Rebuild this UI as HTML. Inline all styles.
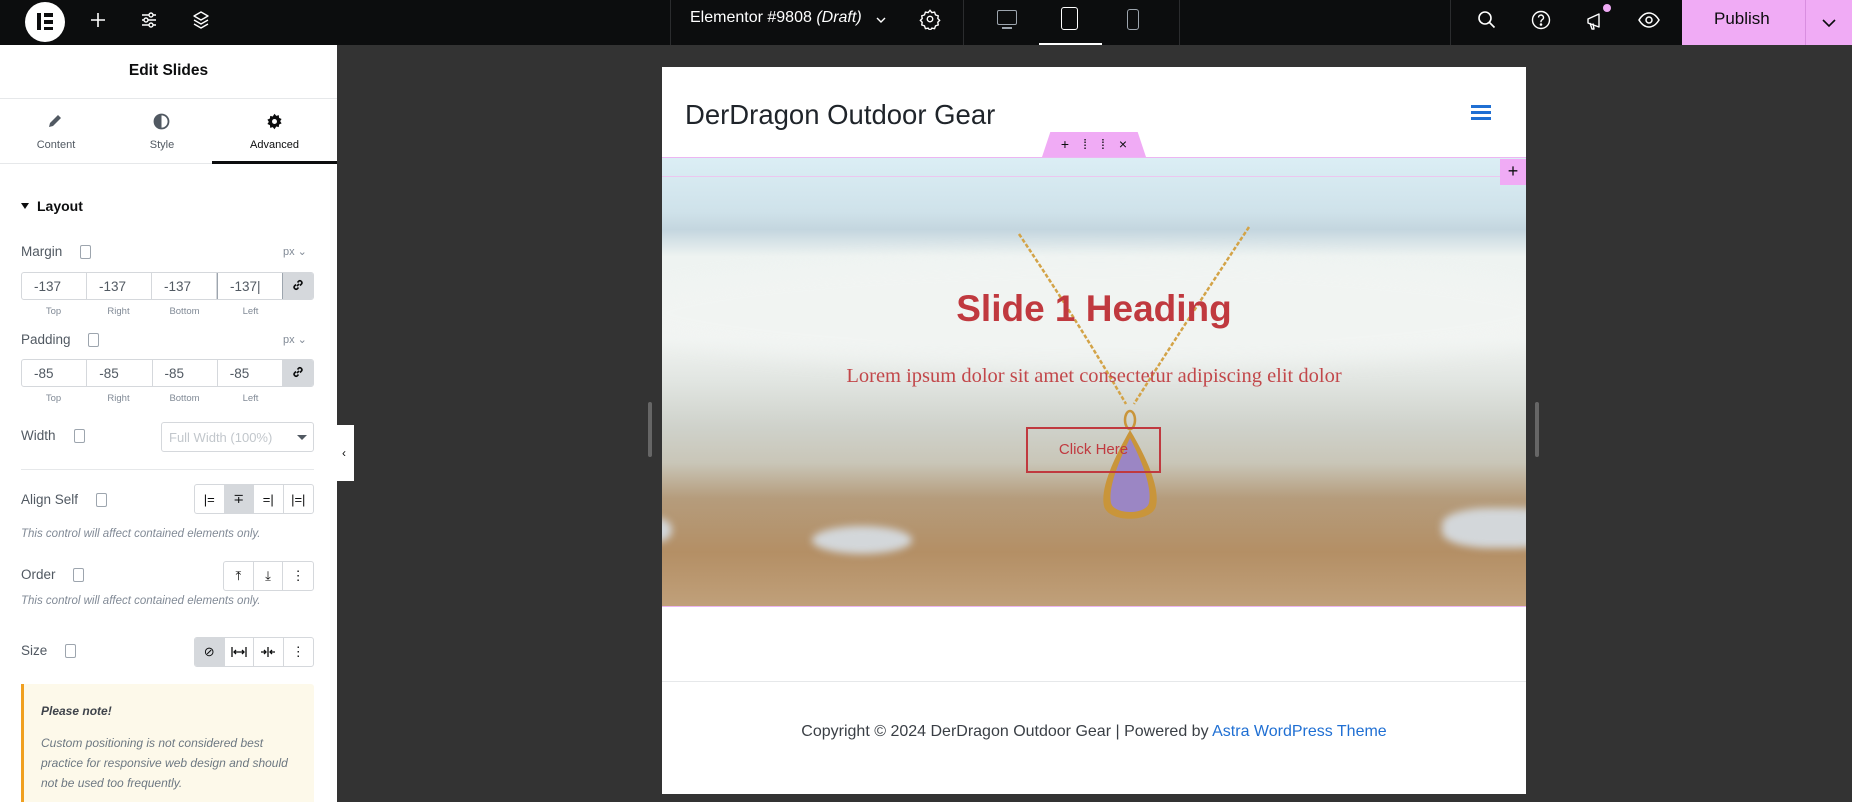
<!DOCTYPE html>
<html><head><meta charset="utf-8">
<style>
*{box-sizing:border-box;margin:0;padding:0}
html{width:1852px;height:802px;overflow:hidden}
body{width:1852px;height:802px;overflow:hidden;background:#333;font-family:"Liberation Sans",sans-serif;position:relative}
.abs{position:absolute}
#top{left:0;top:0;width:1852px;height:45px;background:#0c0d0e}
.sep{position:absolute;top:0;width:1px;height:45px;background:#2b2c2e}
#panel{left:0;top:45px;width:337px;height:757px;background:#fff;overflow:hidden}
.lbl{position:absolute;font-size:13.5px;color:#515962}
.dev{position:absolute;width:11px;height:14px;border:1.5px solid #9da5ae;border-radius:2px}
.inp{position:absolute;height:28px;border:1px solid #d5d8dc;border-radius:3px;display:flex;overflow:hidden}
.inp div{flex:1;border-right:1px solid #d5d8dc;font-size:13.5px;color:#515962;padding:6px 0 0 12px}
.inp div.lk{flex:0 0 30px;border:none;background:#d5d8dc;padding:5px 0 0 8px}
.sub{position:absolute;font-size:9.5px;color:#818a96;text-align:center;width:65px}
.grp{position:absolute;height:30px;border:1px solid #d5d8dc;border-radius:3px;display:flex;overflow:hidden}
.grp div{width:30px;border-right:1px solid #d5d8dc;display:flex;align-items:center;justify-content:center;font-size:13px;color:#0c0d0e;white-space:nowrap}
.grp div:last-child{border-right:none}
.note{position:absolute;left:21px;font-size:11.5px;font-style:italic;color:#818a96}
</style></head><body>

<div id="top" class="abs">
  <div class="abs" style="left:25px;top:2px;width:40px;height:40px;border-radius:50%;background:#fff"></div>
  <div class="abs" style="left:37px;top:13px;width:4px;height:17px;background:#0c0d0e"></div>
  <div class="abs" style="left:44px;top:13px;width:9px;height:3.5px;background:#0c0d0e"></div>
  <div class="abs" style="left:44px;top:20px;width:9px;height:3.5px;background:#0c0d0e"></div>
  <div class="abs" style="left:44px;top:26.5px;width:9px;height:3.5px;background:#0c0d0e"></div>
  <svg class="abs" style="left:88px;top:10px" width="20" height="20" viewBox="0 0 20 20"><path d="M10 3v14M3 10h14" stroke="#fff" stroke-width="1.6"/></svg>
  <svg class="abs" style="left:139px;top:10px" width="20" height="20" viewBox="0 0 20 20" fill="none" stroke="#fff" stroke-width="1.4"><path d="M3 5h14M3 10h14M3 15h14"/><circle cx="12" cy="5" r="2" fill="#0c0d0e"/><circle cx="7" cy="10" r="2" fill="#0c0d0e"/><circle cx="12" cy="15" r="2" fill="#0c0d0e"/></svg>
  <svg class="abs" style="left:190px;top:9px" width="22" height="22" viewBox="0 0 22 22" fill="none" stroke="#fff" stroke-width="1.4" stroke-linejoin="round"><path d="M11 3l7 4-7 4-7-4z"/><path d="M4 11l7 4 7-4"/><path d="M4 15l7 4 7-4"/></svg>
  <div class="sep" style="left:670px"></div>
  <div class="abs" style="left:690px;top:9px;color:#fff;font-size:16px">Elementor #9808 <i>(Draft)</i></div>
  <svg class="abs" style="left:874px;top:13px" width="14" height="14" viewBox="0 0 14 14"><path d="M3 5l4 4 4-4" stroke="#fff" fill="none" stroke-width="1.4"/></svg>
  <svg class="abs" style="left:919px;top:8px" width="22" height="22" viewBox="0 0 24 24" fill="none" stroke="#fff" stroke-width="1.5"><circle cx="12" cy="12" r="3"/><path d="M12 2.5l2 2.5 3-.5 1 3 3 1-.5 3 2 2-2 2 .5 3-3 1-1 3-3-.5-2 2.5-2-2.5-3 .5-1-3-3-1 .5-3-2-2 2-2-.5-3 3-1 1-3 3 .5z"/></svg>
  <div class="sep" style="left:963px"></div>
  <div class="abs" style="left:997px;top:10px;width:20px;height:15px;border:1.5px solid #9da5ae;border-radius:2px"></div>
  <div class="abs" style="left:1002px;top:27px;width:10px;height:2px;background:#9da5ae"></div>
  <div class="abs" style="left:1061px;top:7px;width:17px;height:23px;border:1.8px solid #fff;border-radius:3px"></div>
  <div class="abs" style="left:1039px;top:43px;width:63px;height:2px;background:#fff"></div>
  <div class="abs" style="left:1127px;top:9px;width:12px;height:21px;border:1.5px solid #9da5ae;border-radius:3px"></div>
  <div class="sep" style="left:1179px"></div>
  <div class="sep" style="left:1450px"></div>
  <svg class="abs" style="left:1476px;top:9px" width="22" height="22" viewBox="0 0 22 22" fill="none" stroke="#fff" stroke-width="1.6"><circle cx="9" cy="9" r="6"/><path d="M13.5 13.5l5 5"/></svg>
  <svg class="abs" style="left:1530px;top:9px" width="22" height="22" viewBox="0 0 22 22" fill="none" stroke="#fff" stroke-width="1.4"><circle cx="11" cy="11" r="8.5"/><path d="M8.5 8.5a2.5 2.5 0 1 1 3.5 2.3c-.7.4-1 .9-1 1.7v.8"/><circle cx="11" cy="15.5" r=".6" fill="#fff"/></svg>
  <svg class="abs" style="left:1584px;top:9px" width="24" height="24" viewBox="0 0 24 24" fill="none" stroke="#fff" stroke-width="1.4" stroke-linejoin="round"><path d="M4 10l11-5v13L4 14z"/><path d="M6 14l2 6h2l-1-5.5"/></svg>
  <div class="abs" style="left:1603px;top:4px;width:8px;height:8px;border-radius:50%;background:#f0abf5"></div>
  <svg class="abs" style="left:1637px;top:9px" width="24" height="22" viewBox="0 0 24 22" fill="none" stroke="#fff" stroke-width="1.5"><path d="M2 11c3-5 6.5-7 10-7s7 2 10 7c-3 5-6.5 7-10 7s-7-2-10-7z"/><circle cx="12" cy="11" r="3"/></svg>
  <div class="abs" style="left:1682px;top:0;width:170px;height:45px;background:#f0abf5"></div>
  <div class="abs" style="left:1805px;top:0;width:1px;height:45px;background:#d98ee0"></div>
  <div class="abs" style="left:1714px;top:9px;font-size:17px;color:#0c0d0e">Publish</div>
  <svg class="abs" style="left:1820px;top:14px" width="18" height="18" viewBox="0 0 18 18"><path d="M3 6l6 6 6-6" stroke="#0c0d0e" fill="none" stroke-width="1.6"/></svg>
</div>

<div id="panel" class="abs">
  <div class="abs" style="left:0;top:17px;width:337px;text-align:center;font-weight:bold;font-size:15.5px;color:#0c0d0e">Edit Slides</div>
  <div class="abs" style="left:0;top:53px;width:337px;height:1px;background:#e6e8ea"></div>
  <svg class="abs" style="left:46px;top:68px" width="17" height="17" viewBox="0 0 17 17"><path d="M3 14l1-4 8-8 3 3-8 8z" fill="#515962"/></svg>
  <div class="abs" style="left:0;top:94px;width:112px;text-align:center;font-size:11px;color:#515962">Content</div>
  <svg class="abs" style="left:153px;top:68px" width="17" height="17" viewBox="0 0 17 17"><circle cx="8.5" cy="8.5" r="7" fill="none" stroke="#515962" stroke-width="1.8"/><path d="M8.5 1.5a7 7 0 0 0 0 14z" fill="#515962"/></svg>
  <div class="abs" style="left:112px;top:94px;width:100px;text-align:center;font-size:11px;color:#515962">Style</div>
  <svg class="abs" style="left:266px;top:68px" width="17" height="17" viewBox="0 0 24 24"><path d="M12 1l2.5 3 3.5-1 .5 3.8 3.5 1.6-2 3.1 2 3.1-3.5 1.6-.5 3.8-3.5-1L12 23l-2.5-3-3.5 1-.5-3.8L2 15.6l2-3.1-2-3.1 3.5-1.6L6 4l3.5 1z" fill="#0c0d0e"/><circle cx="12" cy="12" r="3.5" fill="#fff"/></svg>
  <div class="abs" style="left:212px;top:94px;width:125px;text-align:center;font-size:11px;color:#0c0d0e">Advanced</div>
  <div class="abs" style="left:0;top:118px;width:337px;height:1px;background:#e6e8ea"></div>
  <div class="abs" style="left:212px;top:116px;width:125px;height:3px;background:#0c0d0e"></div>

  <div class="abs" style="left:21px;top:158px;width:0;height:0;border-left:4.5px solid transparent;border-right:4.5px solid transparent;border-top:6px solid #0c0d0e"></div>
  <div class="abs" style="left:37px;top:153px;font-weight:bold;font-size:14px;color:#0c0d0e">Layout</div>

  <div class="lbl" style="left:21px;top:199px">Margin</div>
  <div class="dev" style="left:80px;top:200px"></div>
  <div class="abs" style="left:283px;top:200px;font-size:11px;color:#818a96">px ⌄</div>
  <div class="inp" style="left:21px;top:227px;width:293px">
    <div>-137</div><div>-137</div><div>-137</div><div style="border:1px solid #9da5ae;margin:-1px 0">-137|</div><div class="lk"><svg width="14" height="14" viewBox="0 0 14 14" fill="none" stroke="#0c0d0e" stroke-width="1.6"><path d="M6 8l2-2"/><path d="M5 6.5L3.5 8a2 2 0 0 0 2.8 2.8L7.5 9.5"/><path d="M9 7.5l1.5-1.5A2 2 0 0 0 7.7 3.2L6.5 4.5"/></svg></div>
  </div>
  <div class="sub" style="left:21px;top:261px">Top</div>
  <div class="sub" style="left:86px;top:261px">Right</div>
  <div class="sub" style="left:152px;top:261px">Bottom</div>
  <div class="sub" style="left:218px;top:261px">Left</div>

  <div class="lbl" style="left:21px;top:287px">Padding</div>
  <div class="dev" style="left:88px;top:288px"></div>
  <div class="abs" style="left:283px;top:288px;font-size:11px;color:#818a96">px ⌄</div>
  <div class="inp" style="left:21px;top:314px;width:293px">
    <div>-85</div><div>-85</div><div>-85</div><div>-85</div><div class="lk"><svg width="14" height="14" viewBox="0 0 14 14" fill="none" stroke="#0c0d0e" stroke-width="1.6"><path d="M6 8l2-2"/><path d="M5 6.5L3.5 8a2 2 0 0 0 2.8 2.8L7.5 9.5"/><path d="M9 7.5l1.5-1.5A2 2 0 0 0 7.7 3.2L6.5 4.5"/></svg></div>
  </div>
  <div class="sub" style="left:21px;top:348px">Top</div>
  <div class="sub" style="left:86px;top:348px">Right</div>
  <div class="sub" style="left:152px;top:348px">Bottom</div>
  <div class="sub" style="left:218px;top:348px">Left</div>

  <div class="lbl" style="left:21px;top:383px">Width</div>
  <div class="dev" style="left:74px;top:384px"></div>
  <div class="abs" style="left:161px;top:377px;width:153px;height:30px;border:1px solid #d5d8dc;border-radius:3px;font-size:13px;color:#c2c7cc;padding:7px 0 0 7px">Full Width (100%)</div>
  <div class="abs" style="left:297px;top:390px;border-left:5px solid transparent;border-right:5px solid transparent;border-top:5px solid #515962"></div>
  <div class="abs" style="left:21px;top:424px;width:293px;height:1px;background:#e6e8ea"></div>

  <div class="lbl" style="left:21px;top:447px">Align Self</div>
  <div class="dev" style="left:96px;top:448px"></div>
  <div class="grp" style="left:194px;top:439px;width:120px">
    <div>|=</div><div style="background:#d5d8dc">∓</div><div>=|</div><div>|=|</div>
  </div>
  <div class="note" style="top:483px">This control will affect contained elements only.</div>

  <div class="lbl" style="left:21px;top:522px">Order</div>
  <div class="dev" style="left:73px;top:523px"></div>
  <div class="grp" style="left:223px;top:516px;width:91px">
    <div>⤒</div><div>⤓</div><div>⋮</div>
  </div>
  <div class="note" style="top:550px">This control will affect contained elements only.</div>

  <div class="lbl" style="left:21px;top:598px">Size</div>
  <div class="dev" style="left:65px;top:599px"></div>
  <div class="grp" style="left:194px;top:592px;width:120px">
    <div style="background:#d5d8dc">⊘</div>
    <div><svg width="16" height="12" viewBox="0 0 16 12" fill="none" stroke="#0c0d0e" stroke-width="1.3"><path d="M1 1v10M15 1v10M3 6h10M5 4l-2 2 2 2M11 4l2 2-2 2"/></svg></div>
    <div><svg width="16" height="12" viewBox="0 0 16 12" fill="none" stroke="#0c0d0e" stroke-width="1.3"><path d="M8 1v10M1 6h5M10 6h5M4 4l2 2-2 2M12 4l-2 2 2 2"/></svg></div>
    <div>⋮</div>
  </div>

  <div class="abs" style="left:21px;top:639px;width:293px;height:118px;background:#fdf9ea;border-left:3px solid #f0a020;border-radius:0 3px 0 0"></div>
  <div class="abs" style="left:41px;top:659px;font-size:12px;font-weight:bold;font-style:italic;color:#3f444b">Please note!</div>
  <div class="abs" style="left:41px;top:688px;width:260px;font-size:12px;font-style:italic;color:#6d7882;line-height:20px">Custom positioning is not considered best practice for responsive web design and should not be used too frequently.</div>
</div>
<div class="abs" style="left:337px;top:425px;width:17px;height:56px;background:#fff"></div>
<div class="abs" style="left:342px;top:446px;font-size:12px;color:#0c0d0e">‹</div>

<div class="abs" style="left:648px;top:402px;width:4px;height:55px;border-radius:2px;background:#666"></div>
<div class="abs" style="left:1535px;top:402px;width:4px;height:55px;border-radius:2px;background:#666"></div>

<div class="abs" style="left:662px;top:67px;width:864px;height:727px;background:#fff">
  <div class="abs" style="left:23px;top:32px;font-size:27.5px;color:#1f242a">DerDragon Outdoor Gear</div>
  <div class="abs" style="left:809px;top:38px;width:20px;height:2.5px;background:#1f6fd3;box-shadow:0 6px 0 #1f6fd3,0 12px 0 #1f6fd3"></div>
  <div class="abs" style="left:0;top:90px;width:864px;height:450px;overflow:hidden;background:linear-gradient(180deg,#dbeef5 0%,#cfe2ea 12%,#c4d6df 16%,#eef3f1 22%,#f1f4f2 40%,#e1e5e1 50%,#cfd2cb 60%,#c9c6b8 68%,#b59c7c 76%,#b48f65 88%,#c0a07a 100%);border-top:1px solid #ecb6f2;border-bottom:1px solid #ecb6f2">
    <div class="abs" style="left:-40px;top:100px;width:950px;height:110px;background:#f2f5f3;border-radius:50%;filter:blur(10px);opacity:.7"></div>
    <div class="abs" style="left:150px;top:368px;width:100px;height:28px;background:#d3d7da;border-radius:50%;filter:blur(4px)"></div>
    <div class="abs" style="left:780px;top:350px;width:120px;height:40px;background:#d3d7da;border-radius:40%;filter:blur(4px)"></div>
    <div class="abs" style="left:-20px;top:360px;width:30px;height:24px;background:#d3d7da;border-radius:50%;filter:blur(4px)"></div>
    <div class="abs" style="left:0;top:18px;width:864px;height:1px;background:#ecc6ef"></div>
    <svg class="abs" style="left:0;top:0" width="864" height="450">
      <path d="M357 76 Q420 170 464 246" stroke="#d3a347" stroke-width="2.5" fill="none" stroke-dasharray="4 2"/>
      <path d="M587 69 Q520 170 472 246" stroke="#d3a347" stroke-width="2.5" fill="none" stroke-dasharray="4 2"/>
      <ellipse cx="468" cy="262" rx="5" ry="9" fill="none" stroke="#c9953a" stroke-width="2.5"/>
      <path d="M468 272 C485 300 498 330 494 348 C490 365 446 365 442 348 C438 330 452 300 468 272z" fill="#c9953a"/>
      <path d="M468 280 C481 305 490 330 487 345 C484 357 452 357 449 345 C446 330 456 305 468 280z" fill="#9b86c4"/>
    </svg>
    <div class="abs" style="left:0;top:130px;width:864px;text-align:center;font-size:37px;font-weight:bold;color:#c0393f">Slide 1 Heading</div>
    <div class="abs" style="left:0;top:207px;width:864px;text-align:center;font-family:'Liberation Serif',serif;font-size:20.5px;color:#c2474a">Lorem ipsum dolor sit amet consectetur adipiscing elit dolor</div>
    <div class="abs" style="left:364px;top:269px;width:135px;height:46px;border:2px solid #c0393f;font-size:15px;color:#c0393f;text-align:center;padding-top:12px">Click Here</div>
    <div class="abs" style="left:838px;top:1px;width:26px;height:26px;background:#f0abf5;font-size:18px;text-align:center;line-height:24px;color:#0c0d0e">+</div>
  </div>
  <div class="abs" style="left:380px;top:65px;width:104px;height:25px;background:#f0abf5;clip-path:polygon(8% 0,92% 0,100% 100%,0 100%);font-size:14px;color:#0c0d0e;text-align:center;line-height:25px;letter-spacing:14px;padding-left:14px">+⁞⁞×</div>
  <div class="abs" style="left:0;top:614px;width:864px;height:1px;background:#e6e8ea"></div>
  <div class="abs" style="left:0;top:656px;width:864px;text-align:center;font-size:16px;color:#3a3f45">Copyright © 2024 DerDragon Outdoor Gear | Powered by <span style="color:#1f6fd3">Astra WordPress Theme</span></div>
</div>
</body></html>
